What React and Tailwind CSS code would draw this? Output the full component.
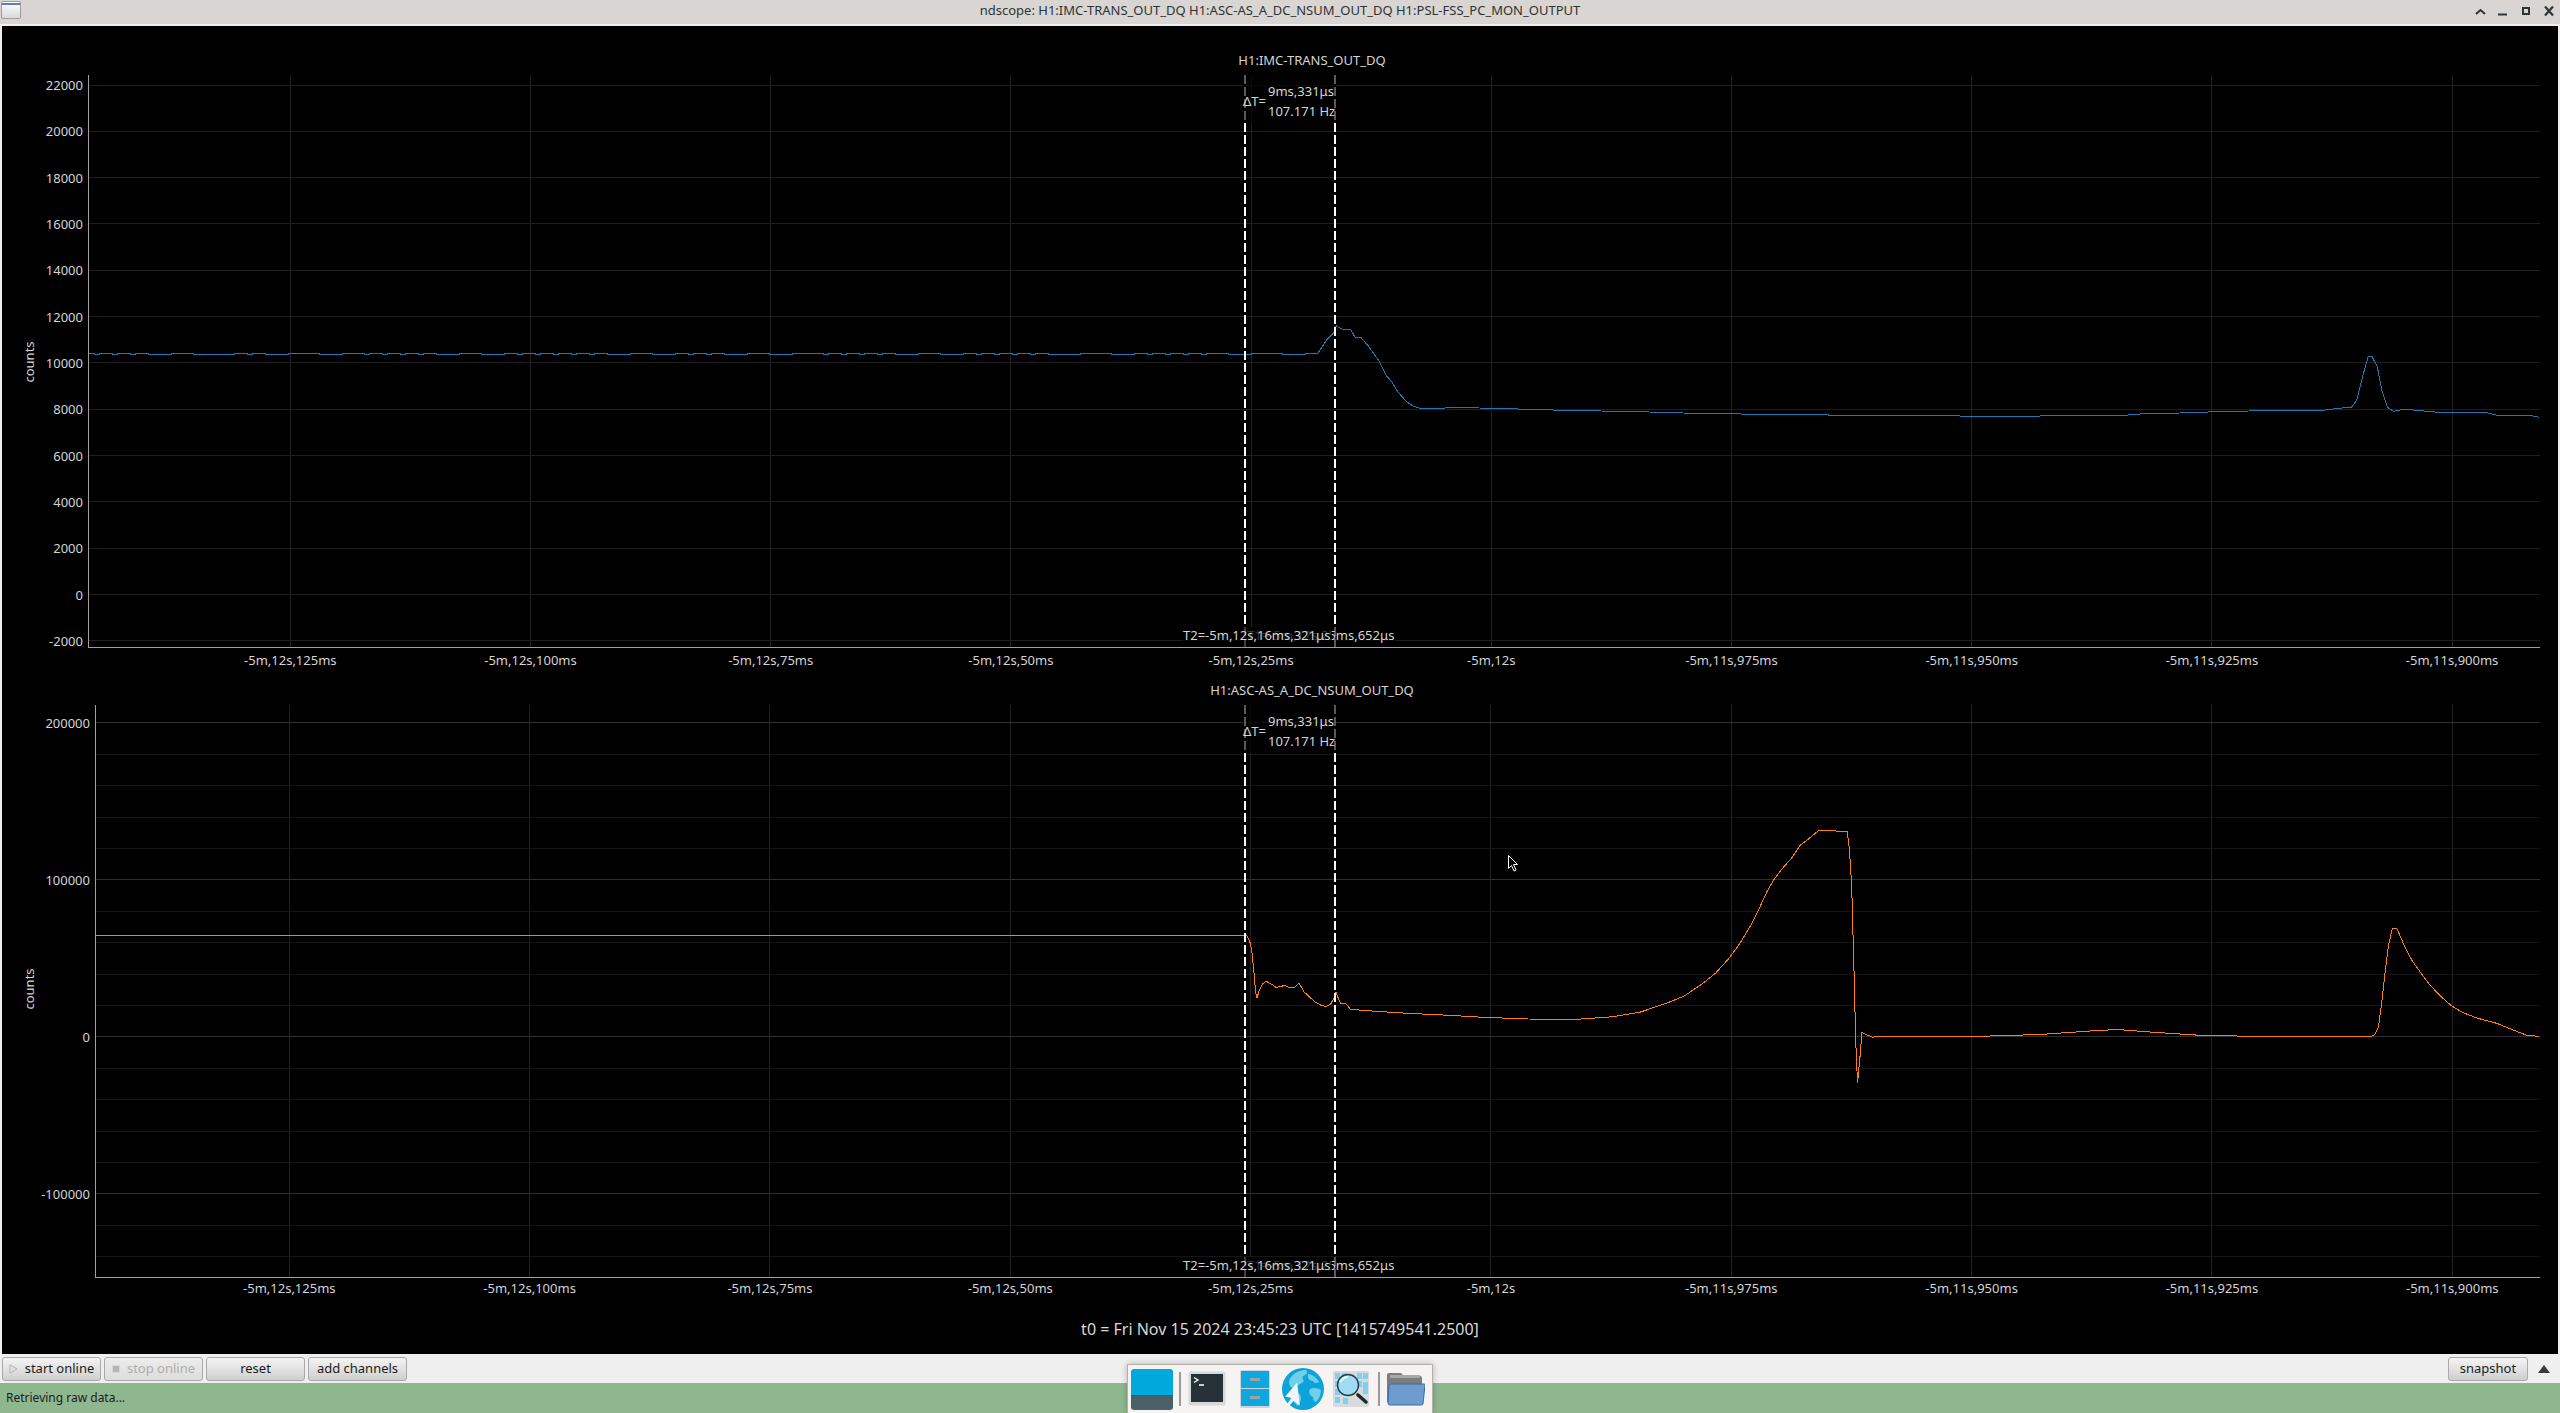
import React from 'react';

const XTICKS = ['-5m,12s,125ms', '-5m,12s,100ms', '-5m,12s,75ms', '-5m,12s,50ms', '-5m,12s,25ms', '-5m,12s', '-5m,11s,975ms', '-5m,11s,950ms', '-5m,11s,925ms', '-5m,11s,900ms'];

// blue trace: flat part has a small wobble
const flatBlue = [];
for (let x = 88; x < 1318; x += 9) {
  flatBlue.push([x, Math.sin(x * 0.37) + Math.sin(x * 0.11) > 0.2 ? 353 : 354.4]);
}
const bluePts = [...flatBlue,
  [1318, 353], [1326.7, 340], [1334, 332.3], [1336, 325.7], [1341.7, 329], [1350.7, 329.3], [1355, 337.3], [1360.7, 337.3],
  [1368.3, 346], [1378.3, 360], [1386.7, 376], [1391.7, 381.7], [1397.7, 391.7], [1406.7, 401.7], [1413.3, 406.3], [1420, 408.3],
  [1443.3, 408.3], [1450, 407.3], [1500, 408.5], [1570, 410.5], [1632, 411.5], [1700, 413.5], [1796, 414.7], [1900, 415.7],
  [1960, 416], [2040, 416], [2090, 415.8], [2122, 415.5], [2140, 414], [2180, 413], [2222, 411.5], [2286, 410.3], [2300, 410.7], [2316.7, 411], [2333, 409],
  [2351.7, 407], [2356.7, 400], [2361.7, 380], [2368.3, 356], [2371.7, 356], [2377.3, 366.7], [2381.7, 390], [2387.3, 407.3],
  [2393.3, 411.3], [2403.3, 409.3], [2413.3, 410], [2438.3, 412.3], [2485, 412.3], [2500, 416], [2528.3, 415], [2539, 417.3],
];

const orangePts = [
  [95, 935.7], [1244, 935.7], [1246.8, 935.7], [1250.4, 943.3], [1252, 953], [1254, 973], [1255.7, 993], [1257, 998], [1259.3, 990],
  [1262.4, 984], [1266, 981.3], [1271.3, 984], [1275.8, 987.3], [1280.3, 986.7], [1284.7, 985.3], [1289, 987.3], [1293.7, 988],
  [1299, 983], [1303.9, 991.7], [1309.3, 996.7], [1314.6, 1001.7], [1320.4, 1005], [1325.8, 1006.7], [1330.7, 1004], [1333.8, 998.3],
  [1336, 992.3], [1338.3, 998.3], [1340.5, 1003.3], [1346, 1003.7], [1350.4, 1009.3], [1371.8, 1011], [1407.5, 1013.3], [1443, 1015],
  [1483.4, 1017.3], [1528, 1019], [1577, 1019.3], [1612.9, 1016.7], [1639.6, 1012.3], [1666.4, 1003.3], [1684.3, 996], [1702, 984],
  [1715.5, 973.3], [1729, 958.3], [1740, 943.3], [1751, 925], [1760, 906.7], [1766.9, 891.7], [1773.6, 880], [1782.5, 868.3],
  [1791.4, 858.3], [1800.4, 845], [1809.3, 838.3], [1818, 831], [1823.6, 830.7], [1847.2, 831.3], [1849.5, 850], [1851.7, 886.7],
  [1853.9, 966.7], [1855.7, 1040], [1857.5, 1083.3], [1860, 1056.7], [1862, 1032.3], [1867.3, 1035], [1872.7, 1037.3], [1876, 1036.3],
  [1980, 1036.3], [2040, 1034.5], [2090, 1031], [2117, 1029.5], [2150, 1032], [2200, 1035.3], [2253, 1036.3],
  [2371, 1036.3], [2374.3, 1035], [2378.3, 1027.7], [2381.7, 1003.3], [2385, 973.3], [2388.3, 946.7], [2392.3, 928.3], [2396.7, 928.3],
  [2403.3, 943.3], [2411.7, 960], [2420, 971.7], [2430, 985], [2440, 995.7], [2451.7, 1006], [2463.3, 1012.7], [2476.7, 1018],
  [2496.7, 1023.3], [2510, 1028.7], [2526.7, 1035.3], [2539, 1036.3],
];

const toStr = (pts) => pts.map((p) => p.join(',')).join(' ');

function Hline({ y, x1, color }) {
  return <line x1={x1} x2={2540} y1={y} y2={y} stroke={color} strokeWidth="1" shapeRendering="crispEdges" />;
}

// one plot panel; d is the page y offset of the panel's annotations
function Plot({ top, d, axisX, tick0, tickStep, title, ylabels, hlines, trace, color, countsY, children }) {
  const axisTop = 75 + d;
  const axisBottom = d ? 1277 : 647;
  return (
    <svg className="block w-full h-[630px] shrink-0" viewBox={`2 ${top} 2556 630`}>
      {XTICKS.map((t, i) => (
        <line key={t} x1={tick0 + i * tickStep} x2={tick0 + i * tickStep} y1={axisTop} y2={axisBottom} stroke="#222222" shapeRendering="crispEdges" />
      ))}
      {hlines.map((h) => <Hline key={h.y} y={h.y} x1={axisX} color={h.c} />)}
      <polyline points={toStr(trace)} fill="none" stroke={color} strokeWidth="1" shapeRendering="crispEdges" />
      <line x1={axisX} x2={axisX} y1={axisTop} y2={axisBottom} stroke="#a0a0a0" shapeRendering="crispEdges" />
      <line x1={axisX} x2={2540} y1={axisBottom} y2={axisBottom} stroke="#a0a0a0" shapeRendering="crispEdges" />
      {ylabels.map((l) => (
        <text key={l.t} x={axisX - 5} y={l.y + 5.5} textAnchor="end" className="fill-[#d4d4d4] text-[13px]">{l.t}</text>
      ))}
      {XTICKS.map((t, i) => (
        <text key={t} x={tick0 + i * tickStep} y={(d ? 1288 : 660) + 4.5} textAnchor="middle" className="fill-[#d4d4d4] text-[13px]">{t}</text>
      ))}
      <text x="1312" y={64.5 + d} textAnchor="middle" className="fill-[#d4d4d4] text-[13px]">{title}</text>
      <text x="34" y={countsY} textAnchor="middle" transform={`rotate(-90 34 ${countsY})`} className="fill-[#d4d4d4] text-[13px]">counts</text>

      <line x1="1245" x2="1245" y1={axisTop} y2={axisBottom} stroke="#ffffff" strokeWidth="2" strokeDasharray="9 3" shapeRendering="crispEdges" />
      <line x1="1334.5" x2="1334.5" y1={axisTop} y2={axisBottom} stroke="#ffffff" strokeWidth="2" strokeDasharray="9 3" shapeRendering="crispEdges" />

      {/* delta label */}
      <rect x="1243" y={axisTop} width="93" height="48" fill="#000000" fillOpacity="0.65" />
      <text x="1243" y={105.5 + d} className="fill-[#d4d4d4] text-[13px]">ΔT=</text>
      <text x="1268" y={95.5 + d} className="fill-[#d4d4d4] text-[13px]">9ms,331μs</text>
      <text x="1268" y={115.5 + d} className="fill-[#d4d4d4] text-[13px]">107.171 Hz</text>

      {/* cursor time labels, T2 sits on top of T1 */}
      <rect x="1247" y={627 + d} width="149" height="20" fill="#000000" fillOpacity="0.65" />
      <text x="1247" y={640 + d} className="fill-[#d4d4d4] text-[13px]">T1=-5m,12s,25ms,652μs</text>
      <rect x="1183" y={627 + d} width="149" height="20" fill="#000000" fillOpacity="0.75" />
      <text x="1183" y={640 + d} className="fill-[#d4d4d4] text-[13px]">T2=-5m,12s,16ms,321μs</text>
      {children}
    </svg>
  );
}

function Btn({ children, disabled }) {
  return (
    <button className={`h-6 w-[99px] flex items-center justify-center gap-[7px] rounded-[3px] border border-[#a9a9a9] text-[13px] ${disabled ? 'bg-gradient-to-b from-[#ececec] to-[#dddddd] text-[#aeaeae]' : 'bg-gradient-to-b from-[#f4f4f4] to-[#cfcfcf] text-[#1c1c1c]'}`}>
      {children}
    </button>
  );
}

function Sep() {
  return <div className="w-[2px] h-[34px] bg-[#9a9a9a] shrink-0" />;
}

function Dock() {
  return (
    <div className="absolute left-[1127px] top-[1364px] w-[306px] h-[49px] flex items-center bg-[#f5f4f3] border-t border-x border-[#b3b0aa] shadow-[0_0_6px_rgba(0,0,0,0.25)]">
      <div className="ml-[3px] w-[42px] h-[41px] shrink-0 rounded-[3px] overflow-hidden flex flex-col">
        <div className="h-[27px] bg-[#00a9dc] border-b border-[#0a6f8e]" />
        <div className="flex-1 bg-[#4b5f6b]" />
      </div>
      <div className="ml-[6px]"><Sep /></div>
      <svg className="ml-[7px] shrink-0" width="38" height="36" viewBox="0 0 38 36">
        <rect x="0.5" y="0.5" width="37" height="34" rx="2" fill="#d6d9db" />
        <rect x="3" y="3" width="32" height="28" fill="#263238" />
        <path d="M6 6.5l4 2.5-4 2.5M11 14h5" fill="none" stroke="#ffffff" strokeWidth="1.3" />
      </svg>
      <svg className="ml-[14px] shrink-0" width="30" height="38" viewBox="0 0 30 38">
        <rect x="0" y="0" width="30" height="38" rx="2" fill="#c9d3d8" />
        <rect x="1" y="1" width="28" height="17" fill="#10a6de" />
        <rect x="1" y="19" width="28" height="17" fill="#10a6de" />
        <rect x="10" y="8" width="10" height="3" fill="#9aa5aa" />
        <rect x="10" y="26" width="10" height="3" fill="#9aa5aa" />
      </svg>
      <svg className="ml-[12px] shrink-0" width="42" height="42" viewBox="0 0 42 42">
        <circle cx="21" cy="21" r="21" fill="#0ba3d9" />
        <path d="M9 9c4-5 10-7 15-7 2 2 1 4-1 5-3 1-3 4-1 6-2 3-6 3-7 6-1 3-4 2-6 0-2-2-3-6 0-10z" fill="#6fd0ec" />
        <path d="M26 6c4 0 9 4 11 8-2 2-5 1-6-1-2 0-6-1-5-7zM28 21c4-2 8-1 11 1 0 4-2 9-5 12-2 0-3-3-3-5-3-1-5-5-3-8zM15 25c4 1 5 5 3 9l-2 4c-3-2-5-6-4-9 1-2 2-3 3-4z" fill="#6fd0ec" />
        <path d="M16 14l1 23-6-5-5 5-1-3 4-5-6-2z" transform="translate(0 1) rotate(-4 10 25)" fill="#f2f4f5" />
      </svg>
      <svg className="ml-[9px] shrink-0" width="36" height="36" viewBox="0 0 36 36">
        <rect width="36" height="36" rx="2" fill="#d7dbde" />
        {[[2, 2], [9, 2], [24, 2], [30, 2], [2, 10], [24, 10], [30, 11], [2, 18], [30, 17], [2, 26], [10, 27]].map(([x, y]) => (
          <rect key={`${x}-${y}`} x={x} y={y} width="5" height="6" fill="#7fd2ee" />
        ))}
        <circle cx="15" cy="14" r="10.5" fill="#9fdcf2" stroke="#24404e" strokeWidth="1.5" />
        <path d="M7 11c2-3 5-5 8-5" fill="none" stroke="#e6f7fd" strokeWidth="2" />
        <path d="M23 22l2 2" stroke="#d8b23a" strokeWidth="3" />
        <path d="M25 24l8 7" stroke="#1c2a30" strokeWidth="3.5" strokeLinecap="round" />
      </svg>
      <div className="ml-[9px]"><Sep /></div>
      <svg className="ml-[7px] shrink-0" width="38" height="34" viewBox="0 0 38 34">
        <path d="M0 3a2 2 0 012-2h12l3 3h16a2 2 0 012 2v24H0z" fill="#7b7d7e" />
        <rect x="3" y="3" width="30" height="3" fill="#a7a9aa" />
        <path d="M4 12h33a1 1 0 011 1l-2 19a2 2 0 01-2 1H3a2 2 0 01-2-2L2 14a2 2 0 012-2z" fill="#6f9ccf" stroke="#3e6ba3" />
      </svg>
    </div>
  );
}

const plot1H = [];
for (let i = 0; i <= 12; i++) plot1H.push({ y: Math.round(84.5 + i * 46.32) + 0.5, c: '#1f1f1f' });
const plot1L = [];
for (let i = 0; i <= 12; i++) plot1L.push({ t: String(22000 - i * 2000), y: 84.5 + i * 46.32 });

const plot2H = [];
for (let i = 0; i <= 17; i++) plot2H.push({ y: Math.round(722.3 + i * 31.4) + 0.5, c: i % 5 === 0 ? '#2e2e2e' : '#161616' });
const plot2L = [
  { t: '200000', y: 722.3 }, { t: '100000', y: 879.3 }, { t: '0', y: 1036.3 }, { t: '-100000', y: 1193.3 },
];

export default function App() {
  return (
    <div className="relative w-[2560px] h-[1413px] overflow-hidden flex flex-col bg-[#efefef] font-['Noto_Sans',sans-serif]">
      {/* title bar */}
      <div className="h-6 shrink-0 bg-[#d8d5d2] flex items-center relative">
        <div className="absolute left-[1px] top-[1px] w-5 h-[18px] rounded-[2px] border border-[#9d9d9d] bg-gradient-to-b from-white to-[#d9d9d9]">
          <div className="mt-[1px] h-[2px] bg-[#5b80b4]" />
        </div>
        <div className="w-full text-center text-[13px] leading-5 pb-1 text-[#2e3436]">
          ndscope: H1:IMC-TRANS_OUT_DQ H1:ASC-AS_A_DC_NSUM_OUT_DQ H1:PSL-FSS_PC_MON_OUTPUT
        </div>
        <svg className="absolute left-[2474px] top-[6px]" width="80" height="12" viewBox="0 0 80 12" fill="none" stroke="#2e3436" strokeWidth="2">
          <path d="M2 8l4.5-4 4.5 4" />
          <path d="M24 8.5h9" />
          <rect x="49" y="2" width="6" height="6" />
          <path d="M71 0.5l8 9M79 0.5l-8 9" strokeWidth="2.2" />
        </svg>
      </div>
      <div className="h-[2px] shrink-0 bg-[#f0f0f0]" />

      {/* plots */}
      <div className="flex-1 mx-[2px] bg-black flex flex-col pt-[18px] min-h-0">
        <Plot top={44} d={0} axisX={88} tick0={290.3} tickStep={240.2} title="H1:IMC-TRANS_OUT_DQ" ylabels={plot1L} hlines={plot1H} trace={bluePts} color="#1f77b4" countsY={362} />
        <Plot top={674} d={630} axisX={95} tick0={289.3} tickStep={240.33} title="H1:ASC-AS_A_DC_NSUM_OUT_DQ" ylabels={plot2L} hlines={plot2H} trace={orangePts} color="#ff7f0e" countsY={989}>
          <path d="M1508.5 855.5v13l3-3 2.5 5.5 2-1-2.5-5.5h4z" fill="#000000" stroke="#ffffff" strokeWidth="1" />
        </Plot>
        <div className="flex-1 flex items-center justify-center text-[16px] text-[#d8d8d8]">
          t0 = Fri Nov 15 2024 23:45:23 UTC [1415749541.2500]
        </div>
      </div>

      {/* toolbar */}
      <div className="h-[29px] shrink-0 flex items-start pt-[3px] pl-[2px] gap-[3px]">
        <Btn>
          <svg width="9" height="10" viewBox="0 0 9 10"><path d="M1 0.8l7 4.2-7 4.2z" fill="none" stroke="#b3b3b3" /></svg>
          start online
        </Btn>
        <Btn disabled>
          <span className="w-2 h-2 bg-[#b5b5b5] border border-[#d8d8d8]" />
          stop online
        </Btn>
        <Btn>reset</Btn>
        <Btn>add channels</Btn>
        <div className="ml-auto flex items-center mr-[10px] gap-[10px]">
          <button className="h-6 w-20 rounded-[3px] border border-[#a9a9a9] bg-gradient-to-b from-[#f4f4f4] to-[#cfcfcf] text-[13px] text-[#1c1c1c]">snapshot</button>
          <svg width="12" height="8" viewBox="0 0 12 8"><path d="M6 0l6 8H0z" fill="#3a3a3a" /></svg>
        </div>
      </div>

      {/* status bar */}
      <div className="h-[30px] shrink-0 bg-[#8fb78f] flex items-center pl-[6px] text-[12px] text-[#1c1c1c]">
        Retrieving raw data...
      </div>

      <Dock />
    </div>
  );
}
